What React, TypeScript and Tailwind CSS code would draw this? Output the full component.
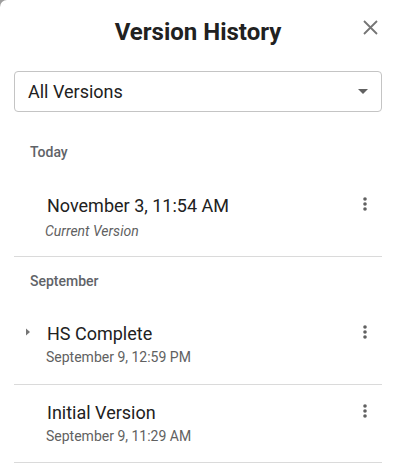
import React from "react";

function Kebab({ top }: { top: number }) {
  return (
    <svg
      width="6"
      height="16"
      viewBox="0 0 6 16"
      className="absolute right-[28px]"
      style={{ top }}
    >
      <circle cx="3" cy="3" r="1.8" fill="#616161" />
      <circle cx="3" cy="8" r="1.8" fill="#616161" />
      <circle cx="3" cy="13" r="1.8" fill="#616161" />
    </svg>
  );
}

function VersionItem({
  title,
  sub,
  italic,
  expandable,
  className,
}: {
  title: string;
  sub: string;
  italic?: boolean;
  expandable?: boolean;
  className: string;
}) {
  return (
    <div className={`relative mx-[14px] border-b border-[#dadada] ${className}`}>
      <div className="relative pl-[33px] text-[18px] leading-[24px] text-[#212121]">
        {expandable && (
          <svg
            width="6"
            height="8"
            viewBox="0 0 6 8"
            className="absolute left-[11px] top-[6px]"
          >
            <path d="M1 0.5 L5 4 L1 7.5 Z" fill="#757575" />
          </svg>
        )}
        {title}
      </div>
      <div
        className={`text-[#616161] leading-[18px] ${
          italic ? "pl-[31px] text-[14px] italic mt-[4px]" : "pl-[32px] text-[14px] mt-[2px]"
        }`}
      >
        {sub}
      </div>
    </div>
  );
}

export default function App() {
  return (
    <div
      className="relative w-[396px] h-[464px] overflow-hidden bg-white"
      style={{ fontFamily: "Roboto, 'Noto Sans', sans-serif" }}
    >
      <div className="absolute left-0 top-0 w-[8px] h-[8px] bg-[#9e9e9e]">
        <div className="w-[8px] h-[8px] bg-white rounded-tl-[7px]" />
      </div>

      <div className="pt-[18px] text-center text-[24px] leading-[28px] font-bold text-[#212121]">
        Version History
      </div>
      <button className="absolute right-[18px] top-[19px] w-[16px] h-[16px] flex items-center justify-center">
        <svg width="15" height="15" viewBox="0 0 15 15">
          <path d="M1 1 L14 14 M14 1 L1 14" stroke="#757575" strokeWidth="1.8" />
        </svg>
      </button>

      <div className="mt-[25px] mx-[14px] h-[41px] border border-[#c4c4c4] rounded-[4px] flex items-center justify-between pl-[13px] pr-[13px]">
        <span className="text-[18px] text-[#212121]">All Versions</span>
        <svg width="10" height="5" viewBox="0 0 10 5">
          <path d="M0 0 L10 0 L5 5 Z" fill="#616161" />
        </svg>
      </div>

      <div className="mt-[32px] pl-[30px] text-[14px] leading-[16px] font-medium text-[#5f6368]">
        Today
      </div>
      <div className="relative">
        <VersionItem
          title="November 3, 11:54 AM"
          sub="Current Version"
          italic
          className="pt-[34px] pb-[16px]"
        />
        <Kebab top={36} />
      </div>

      <div className="mt-[16px] pl-[30px] text-[14px] leading-[16px] font-medium text-[#5f6368]">
        September
      </div>
      <div className="relative">
        <VersionItem
          title="HS Complete"
          sub="September 9, 12:59 PM"
          expandable
          className="pt-[33px] pb-[18px]"
        />
        <Kebab top={35} />
      </div>
      <div className="relative">
        <VersionItem
          title="Initial Version"
          sub="September 9, 11:29 AM"
          className="pt-[16px] pb-[17px]"
        />
        <Kebab top={18} />
      </div>
    </div>
  );
}
